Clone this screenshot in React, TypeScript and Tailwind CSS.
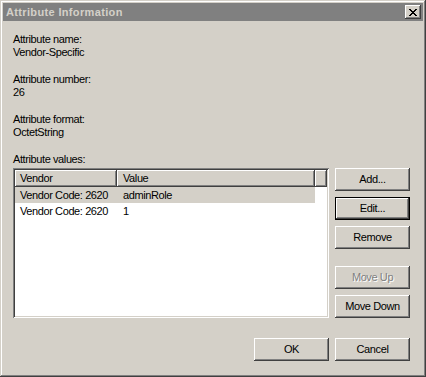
const raised =
  'shadow-[inset_-1px_-1px_#404040,inset_1px_1px_#ffffff,inset_-2px_-2px_#808080,inset_2px_2px_#d4d0c8]'

const rows = [
  { vendor: 'Vendor Code: 2620', value: 'adminRole', selected: true },
  { vendor: 'Vendor Code: 2620', value: '1', selected: false },
]

function Button({ label, isDefault, disabled }: { label: string; isDefault?: boolean; disabled?: boolean }) {
  return (
    <div
      className={
        'w-[75px] h-[23px] flex items-center justify-center bg-[#d4d0c8] ' +
        (isDefault
          ? 'shadow-[inset_0_0_0_1px_#000000,inset_-2px_-2px_#404040,inset_2px_2px_#ffffff,inset_-3px_-3px_#808080]'
          : raised)
      }
    >
      <span
        className={
          disabled ? 'text-[#808080] [text-shadow:1px_1px_0_#ffffff]' : 'text-black'
        }
      >
        {label}
      </span>
    </div>
  )
}

function Field({ label, value }: { label: string; value: string }) {
  return (
    <div className="mb-[14px]">
      <div className="h-[13px]">{label}</div>
      <div className="h-[13px]">{value}</div>
    </div>
  )
}

export default function App() {
  return (
    <div className="w-[426px] h-[377px] p-[3px] flex flex-col bg-[#d4d0c8] font-['Liberation_Sans',Arial,sans-serif] text-[11px] leading-[13px] tracking-[-0.4px] text-black shadow-[inset_-1px_-1px_#404040,inset_1px_1px_#d4d0c8,inset_-2px_-2px_#808080,inset_2px_2px_#ffffff]">
      {/* Title bar */}
      <div className="h-[18px] flex items-center justify-between bg-[#808080] pl-[3px] pr-[2px]">
        <span className="font-bold text-[#d4d0c8] tracking-[0.35px]">Attribute Information</span>
        <div className={'w-[16px] h-[14px] flex items-center justify-center bg-[#d4d0c8] ' + raised}>
          <svg width="8" height="7" viewBox="0 0 8 7" shapeRendering="crispEdges">
            <path
              d="M0 0h2v1h-2zM6 0h2v1h-2zM1 1h2v1h-2zM5 1h2v1h-2zM2 2h4v1h-4zM3 3h2v1h-2zM2 4h4v1h-4zM1 5h2v1h-2zM5 5h2v1h-2zM0 6h2v1h-2zM6 6h2v1h-2z"
              fill="#000"
            />
          </svg>
        </div>
      </div>

      {/* Content */}
      <div className="flex flex-col pl-[10px] pr-[13px] pt-[12px]">
        <Field label="Attribute name:" value="Vendor-Specific" />
        <Field label="Attribute number:" value="26" />
        <Field label="Attribute format:" value="OctetString" />
        <div className="h-[13px] mb-[2px]">Attribute values:</div>

        <div className="flex gap-[6px]">
          {/* List view */}
          <div className="w-[316px] h-[150px] p-[2px] bg-white shadow-[inset_1px_1px_#808080,inset_-1px_-1px_#ffffff,inset_2px_2px_#404040,inset_-2px_-2px_#d4d0c8]">
            <div className="flex h-[17px]">
              <div className={'w-[102px] flex items-center pl-[5px] bg-[#d4d0c8] ' + raised}>Vendor</div>
              <div className={'w-[198px] flex items-center pl-[6px] bg-[#d4d0c8] ' + raised}>Value</div>
              <div className={'flex-1 bg-[#d4d0c8] ' + raised} />
            </div>
            {rows.map((r, i) => (
              <div
                key={i}
                className={'flex w-[300px] h-[16px] items-center ' + (r.selected ? 'bg-[#d4d0c8]' : '')}
              >
                <div className="w-[102px] pl-[5px]">{r.vendor}</div>
                <div className="pl-[6px]">{r.value}</div>
              </div>
            ))}
          </div>

          {/* Side buttons */}
          <div className="flex flex-col">
            <Button label="Add..." />
            <div className="mt-[6px]">
              <Button label="Edit..." isDefault />
            </div>
            <div className="mt-[6px]">
              <Button label="Remove" />
            </div>
            <div className="mt-[17px]">
              <Button label="Move Up" disabled />
            </div>
            <div className="mt-[6px]">
              <Button label="Move Down" />
            </div>
          </div>
        </div>

        {/* Bottom buttons */}
        <div className="mt-[20px] flex justify-end gap-[6px]">
          <Button label="OK" />
          <Button label="Cancel" />
        </div>
      </div>
    </div>
  )
}
